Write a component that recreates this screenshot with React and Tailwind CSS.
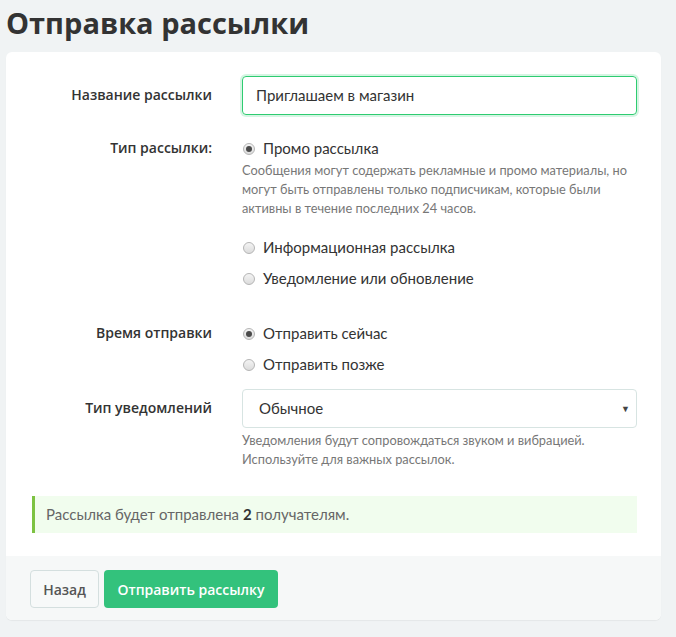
import React from "react";

function Radio({ checked, label }) {
  return (
    <label className="flex items-center h-[31px] text-[15px] text-[#333]">
      <span className="w-[12px] h-[12px] rounded-full border border-[#b5b5b5] bg-gradient-to-b from-[#f4f4f4] to-[#dcdcdc] flex items-center justify-center mr-[8px] ml-[1px]">
        {checked && <span className="w-[6px] h-[6px] rounded-full bg-[#4a4a4a]" />}
      </span>
      {label}
    </label>
  );
}

function Row({ label, children, labelClass = "" }) {
  return (
    <div className="grid grid-cols-[206px_1fr] gap-x-[30px]">
      <div className={"text-right text-[14px] leading-[21px] font-semibold text-[#333] font-['Open_Sans',sans-serif] " + labelClass}>{label}</div>
      <div>{children}</div>
    </div>
  );
}

export default function App() {
  return (
    <div className="min-h-[637px] bg-[#f0f3f4] px-[6px] pt-[3px] pb-[17px] font-['Lato','Open_Sans',sans-serif]">
      <h1 className="text-[29px] leading-[40px] font-bold text-[#333] mb-[9px] font-['Open_Sans',sans-serif]">Отправка рассылки</h1>
      <div className="bg-white rounded-[6px] overflow-hidden shadow-[0_1px_1px_rgba(0,0,0,0.05)] w-[655px]">
        <div className="pt-[24px] pb-[23px] pr-[24px]">
          <Row label="Название рассылки" labelClass="pt-[8px]">
            <div className="h-[39px] rounded-[4px] border border-[#2ecc71] shadow-[0_0_0_2px_rgba(46,204,113,0.2)] flex items-center px-[13px] text-[15px] text-[#333]">
              Приглашаем в магазин
            </div>
          </Row>
          <div className="h-[18px]" />
          <Row label="Тип рассылки:" labelClass="pt-[4px]">
            <Radio checked label="Промо рассылка" />
            <p className="text-[12.8px] leading-[19px] text-[#777] mt-[-3px]">
              Сообщения могут содержать рекламные и промо материалы, но могут быть отправлены только подписчикам, которые были активны в течение последних 24 часов.
            </p>
            <div className="h-[14px]" />
            <Radio label="Информационная рассылка" />
            <Radio label="Уведомление или обновление" />
          </Row>
          <div className="h-[24px]" />
          <Row label="Время отправки" labelClass="pt-[4px]">
            <Radio checked label="Отправить сейчас" />
            <Radio label="Отправить позже" />
          </Row>
          <div className="h-[9px]" />
          <Row label="Тип уведомлений" labelClass="pt-[8px]">
            <div className="h-[39px] rounded-[4px] border border-[#d7e4e2] flex items-center justify-between pl-[16px] pr-[6px] text-[15px] text-[#333]">
              <span>Обычное</span>
              <span className="text-[9px] text-[#444]">▼</span>
            </div>
            <p className="text-[12.8px] leading-[19px] text-[#777] mt-[3px]">
              Уведомления будут сопровождаться звуком и вибрацией.
              <br />
              Используйте для важных рассылок.
            </p>
          </Row>
          <div className="ml-[26px] mt-[27px] h-[37px] bg-[#f1fdee] border-l-[3px] border-[#7dc242] flex items-center pl-[11px] text-[15px] text-[#666]">
            <span>
              Рассылка будет отправлена <b className="text-[#333]">2</b> получателям.
            </span>
          </div>
        </div>
        <div className="bg-[#f6f8f8] px-[24px] pt-[14px] pb-[12px] flex gap-[5px] font-['Open_Sans',sans-serif]">
          <button className="h-[38px] w-[69px] rounded-[4px] border border-[#d4dfdf] bg-[#f7f9f9] text-[14px] font-semibold text-[#555]">
            Назад
          </button>
          <button className="h-[38px] w-[174px] rounded-[4px] bg-[#33c27c] text-[14px] font-semibold text-white">
            Отправить рассылку
          </button>
        </div>
      </div>
    </div>
  );
}
